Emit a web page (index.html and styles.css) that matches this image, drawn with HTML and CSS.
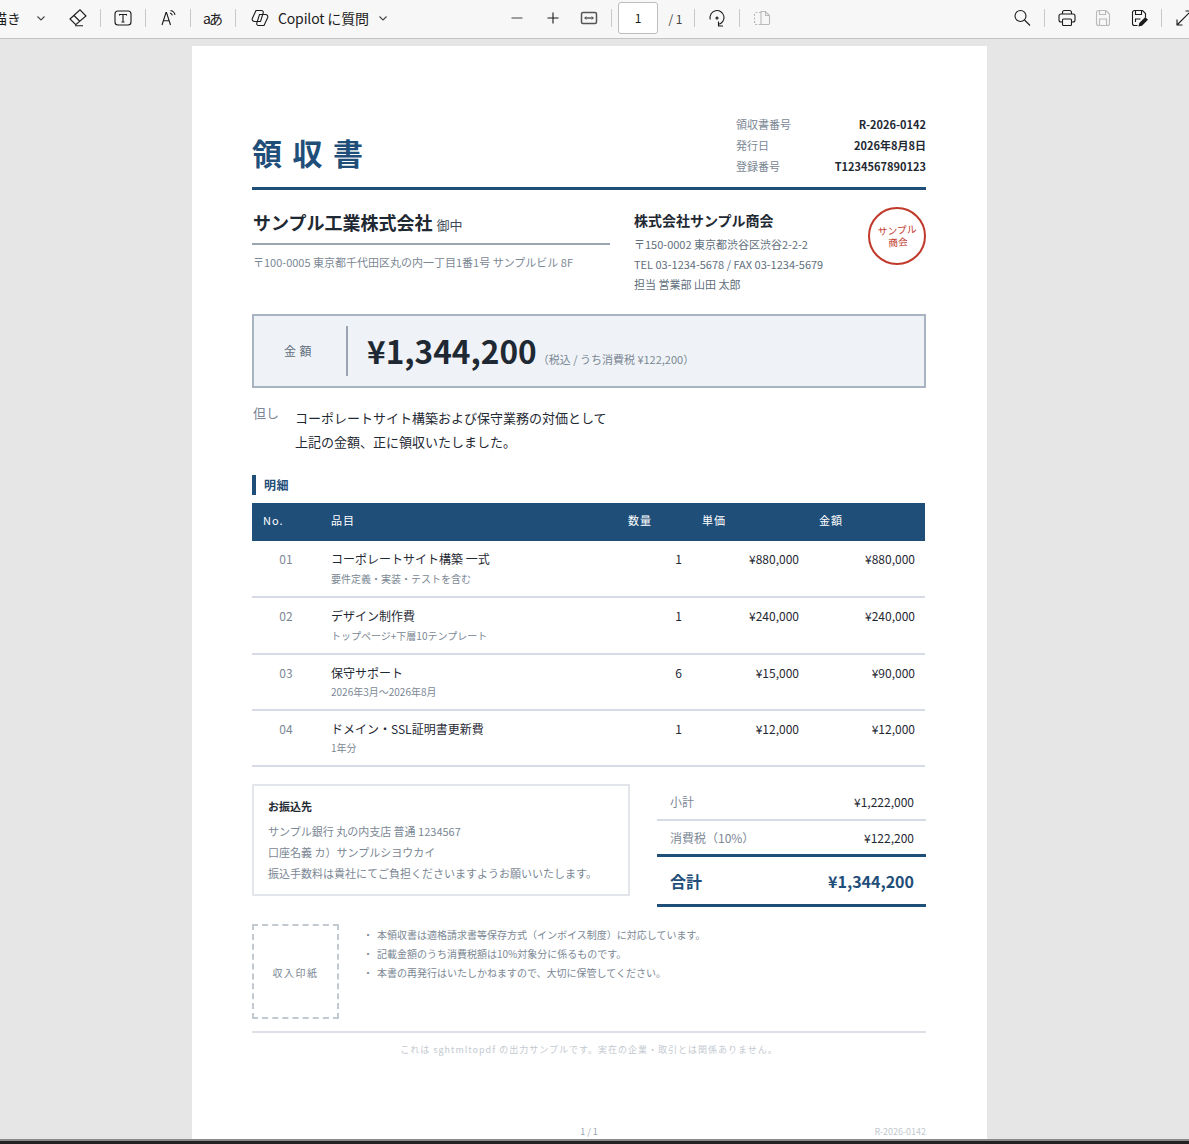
FILE: index.html
```html
<!DOCTYPE html>
<html lang="ja">
<head>
    <meta charset="UTF-8">
    <meta name="viewport" content="width=device-width, initial-scale=1.0">
    <title>領収書</title>
    <link rel="stylesheet" href="styles.css">
</head>
<body>
    <!-- PDF viewer toolbar -->
    <div class="toolbar">
        <div class="tool-draw">
            <span>描き</span>
            <svg class="chev" viewBox="0 0 8 5"><path d="M.5.5 4 4 7.500.5"/></svg>
        </div>
        <div class="tool">
            <svg viewBox="0 0 18 18"><path d="M1 10 11 .8 17 7 7 15.500H6.500zM5 6.500l6 6M6 16.800h8"/></svg>
        </div>
        <i class="sep"></i>
        <div class="tool">
            <svg viewBox="0 0 18 18"><rect x="1" y="2" width="16" height="14" rx="3"/><path d="M5.500 6.500v-1h7v1M9 5.500V13M7.500 13h3"/></svg>
        </div>
        <i class="sep"></i>
        <div class="tool">
            <svg viewBox="0 0 18 18"><path d="M3 16 7 3.500h.5L11.500 16M4.300 11.800h6M11 4c1.300.3 2 1 2.400 2.300M11.500 1.500c2.500.5 4 2 4.500 4.500"/></svg>
        </div>
        <i class="sep"></i>
        <div class="tool tool-text">aあ</div>
        <i class="sep"></i>
        <div class="tool-copilot">
            <svg class="copilot" viewBox="0 0 18 18"><path d="M5 1.500h5.500a1.800 1.800 0 0 1 1.700 2.400L9.500 12.500h-6a2.300 2.300 0 0 1-2.200-3z"/><path d="M8.500 5.500h6a2.300 2.300 0 0 1 2.200 3L13 16.500H7.500a1.800 1.800 0 0 1-1.700-2.400z"/></svg>
            <span>Copilot に質問</span>
            <svg class="chev" viewBox="0 0 8 5"><path d="M.5.5 4 4 7.500.5"/></svg>
        </div>

        <div class="tool tool-first">
            <svg class="soft" viewBox="0 0 18 18"><path d="M3.500 9h11"/></svg>
        </div>
        <div class="tool">
            <svg viewBox="0 0 18 18"><path d="M3.500 9h11M9 3.500v11"/></svg>
        </div>
        <div class="tool">
            <svg class="soft fit" viewBox="0 0 18 18"><rect x="1.500" y="3.500" width="15" height="11" rx="1.500"/><path class="solid" d="m4 9 2.500-2v4zM14 9l-2.500-2v4z"/><path d="M6.500 9h5"/></svg>
        </div>
        <i class="sep"></i>
        <div class="page-input">1</div>
        <span class="page-total">/ 1</span>
        <i class="sep"></i>
        <div class="tool">
            <svg viewBox="0 0 18 18"><path d="M2.300 10.500A7 7 0 1 1 10 15.500M10.500 12.500V17H15"/><circle cx="9" cy="9" r="1"/></svg>
        </div>
        <i class="sep"></i>
        <div class="tool tool-off">
            <svg viewBox="0 0 18 18"><path stroke-dasharray="2 1.500" d="M8 3.500H3a1.500 1.500 0 0 0-1.500 1.500v9A1.500 1.500 0 0 0 3 15.500h5"/><path d="M8 2.500h4.500l4 4v7.500a1.500 1.500 0 0 1-1.500 1.500H8zM12.500 2.500v4h4"/></svg>
        </div>

        <div class="tool tool-right">
            <svg viewBox="0 0 18 18"><circle cx="7.500" cy="7" r="5.500"/><path d="m11.500 11 5.500 5.500"/></svg>
        </div>
        <i class="sep"></i>
        <div class="tool">
            <svg viewBox="0 0 18 18"><path d="M4.500 5V3.500a2 2 0 0 1 2-2h5a2 2 0 0 1 2 2V5M4.500 13H3a2 2 0 0 1-2-2V7a2 2 0 0 1 2-2h12a2 2 0 0 1 2 2v4a2 2 0 0 1-2 2h-1.500"/><rect x="4.500" y="10" width="9" height="6.500" rx="1"/></svg>
        </div>
        <div class="tool tool-off">
            <svg viewBox="0 0 18 18"><path d="M2.500 3.500a2 2 0 0 1 2-2h7.500l3.500 3.500v9.500a2 2 0 0 1-2 2h-9a2 2 0 0 1-2-2zM5.500 1.500v4h6v-4M5.500 16.500V10h7v6.500"/></svg>
        </div>
        <div class="tool">
            <svg viewBox="0 0 18 18"><path d="M7.500 16.500h-3a2 2 0 0 1-2-2v-11a2 2 0 0 1 2-2h8l3 3v4M5.500 1.500v4h6v-4M5.500 13v-3h5"/><path class="solid" d="m8.500 17.500.8-3.500 6-6 2.700 2.700-6 6z"/></svg>
        </div>
        <i class="sep"></i>
        <div class="tool tool-last">
            <svg viewBox="0 0 18 18"><path d="M2 16 16 2M2 10.500V16h5.500M10.500 2H16v5.500"/></svg>
        </div>
    </div>

    <div class="viewer">
        <div class="page">
            <!-- Title and receipt info -->
            <div class="doc-header">
                <h1 class="doc-title">領収書</h1>
                <div class="doc-meta">
                    <div class="meta-row"><span>領収書番号</span><b>R-2026-0142</b></div>
                    <div class="meta-row"><span>発行日</span><b>2026年8月8日</b></div>
                    <div class="meta-row"><span>登録番号</span><b>T1234567890123</b></div>
                </div>
            </div>

            <div class="parties">
                <div class="to">
                    <div class="to-name">サンプル工業株式会社 <small>御中</small></div>
                    <div class="to-addr">〒100-0005 東京都千代田区丸の内一丁目1番1号 サンプルビル 8F</div>
                </div>
                <div class="from">
                    <div class="from-name">株式会社サンプル商会</div>
                    <p>〒150-0002 東京都渋谷区渋谷2-2-2</p>
                    <p>TEL 03-1234-5678 / FAX 03-1234-5679</p>
                    <p>担当 営業部 山田 太郎</p>
                </div>
                <div class="seal"><span>サンプル<br>商会</span></div>
            </div>

            <div class="amount-box">
                <div class="amount-label">金 額</div>
                <div class="amount-value">¥1,344,200</div>
                <div class="amount-note">（税込 / うち消費税 ¥122,200）</div>
            </div>

            <div class="tadashi">
                <div class="tadashi-label">但し</div>
                <div class="tadashi-text">コーポレートサイト構築および保守業務の対価として<br>上記の金額、正に領収いたしました。</div>
            </div>

            <h2 class="section-title">明細</h2>
            <table class="items">
                <colgroup>
                    <col class="col-no"><col class="col-name"><col class="col-qty"><col class="col-price"><col class="col-sum">
                </colgroup>
                <thead>
                    <tr><th>No.</th><th>品目</th><th>数量</th><th>単価</th><th>金額</th></tr>
                </thead>
                <tbody>
                    <tr>
                        <td class="no">01</td>
                        <td>コーポレートサイト構築 一式<span class="sub">要件定義・実装・テストを含む</span></td>
                        <td class="num">1</td><td class="num">¥880,000</td><td class="num">¥880,000</td>
                    </tr>
                    <tr>
                        <td class="no">02</td>
                        <td>デザイン制作費<span class="sub">トップページ+下層10テンプレート</span></td>
                        <td class="num">1</td><td class="num">¥240,000</td><td class="num">¥240,000</td>
                    </tr>
                    <tr>
                        <td class="no">03</td>
                        <td>保守サポート<span class="sub">2026年3月〜2026年8月</span></td>
                        <td class="num">6</td><td class="num">¥15,000</td><td class="num">¥90,000</td>
                    </tr>
                    <tr>
                        <td class="no">04</td>
                        <td>ドメイン・SSL証明書更新費<span class="sub">1年分</span></td>
                        <td class="num">1</td><td class="num">¥12,000</td><td class="num">¥12,000</td>
                    </tr>
                </tbody>
            </table>

            <div class="summary">
                <div class="bank">
                    <div class="bank-title">お振込先</div>
                    <p>サンプル銀行 丸の内支店 普通 1234567</p>
                    <p>口座名義 カ）サンプルシヨウカイ</p>
                    <p>振込手数料は貴社にてご負担くださいますようお願いいたします。</p>
                </div>
                <div class="totals">
                    <div class="total-row"><span>小計</span><span class="val">¥1,222,000</span></div>
                    <div class="total-row tax"><span>消費税（10%）</span><span class="val">¥122,200</span></div>
                    <div class="total-row grand"><span>合計</span><span>¥1,344,200</span></div>
                </div>
            </div>

            <div class="extras">
                <div class="stamp">収入印紙</div>
                <ul class="notes">
                    <li>本領収書は適格請求書等保存方式（インボイス制度）に対応しています。</li>
                    <li>記載金額のうち消費税額は10%対象分に係るものです。</li>
                    <li>本書の再発行はいたしかねますので、大切に保管してください。</li>
                </ul>
            </div>

            <div class="disclaimer">これは sghtmltopdf の出力サンプルです。実在の企業・取引とは関係ありません。</div>

            <div class="page-foot">
                <span class="foot-side"></span>
                <span>1 / 1</span>
                <span class="foot-side foot-ref">R-2026-0142</span>
            </div>
        </div>
    </div>
    <div class="taskbar-edge"></div>
</body>
</html>
```

FILE: styles.css
```css
/* General Reset */
html, body {
    margin: 0;
    padding: 0;
    height: 100%;
    overflow: hidden;
    background: #e6e6e6;
    font-family: "Noto Sans CJK JP", "Noto Sans", sans-serif;
    color: #1f2933;
}

body {
    display: flex;
    flex-direction: column;
}

/* Toolbar */
.toolbar {
    flex: none;
    display: flex;
    align-items: center;
    height: 36px;
    padding-bottom: 2px;
    background: #f7f7f7;
    border-bottom: 1px solid #c4c4c4;
    overflow: hidden;
    color: #1b1b1b;
    font-size: 14px;
}

.toolbar svg {
    width: 18px;
    height: 18px;
    fill: none;
    stroke: #1b1b1b;
    stroke-width: 1.1;
}

.toolbar svg .solid {
    fill: #1b1b1b;
    stroke: none;
}

.toolbar svg.soft {
    stroke: #555;
}

.toolbar svg.soft .solid {
    fill: #555;
}

.toolbar svg.fit {
    stroke-width: 1.5;
}

.toolbar svg.chev {
    width: 8px;
    height: 5px;
    stroke: #444;
}

.tool-draw {
    flex: none;
    display: flex;
    align-items: center;
    width: 67px;
    margin-left: -7px;
}

.tool-draw .chev {
    margin-left: 16px;
}

.tool {
    flex: none;
    width: 36px;
    display: flex;
    justify-content: center;
    align-items: center;
}

.tool-text {
    box-sizing: border-box;
    padding-right: 2px;
    font-size: 14px;
    letter-spacing: -2px;
}

.tool-off svg {
    stroke: #b9b9b9;
}

.tool-first {
    margin-left: 104px;
}

.tool-right {
    margin-left: auto;
}

.tool-last {
    margin-right: -13px;
}

.sep {
    flex: none;
    width: 1px;
    height: 18px;
    margin: 0 4px;
    background: #c8c8c8;
}

.tool-copilot {
    flex: none;
    display: flex;
    align-items: center;
    width: 155px;
    padding-left: 11px;
    box-sizing: border-box;
}

.tool-copilot span {
    margin-left: 9px;
    white-space: nowrap;
    letter-spacing: -0.15px;
}

.tool-copilot .chev {
    margin-left: 10px;
}

.page-input {
    flex: none;
    width: 40px;
    height: 32px;
    margin-left: 2px;
    box-sizing: border-box;
    border: 1px solid #bdbdbd;
    border-radius: 3px;
    background: #fff;
    text-align: center;
    line-height: 30px;
    font-size: 12px;
}

.page-total {
    flex: none;
    width: 32px;
    box-sizing: border-box;
    padding-left: 3px;
    text-align: center;
    font-size: 12px;
    color: #444;
}

/* Viewer and page */
.viewer {
    flex: 1;
    min-height: 0;
    display: flex;
    justify-content: center;
    padding: 7px 10px 0 0;
}

.page {
    width: 795px;
    box-sizing: border-box;
    padding: 66px 61px 0 60px;
    background: #fff;
    display: flex;
    flex-direction: column;
}

.taskbar-edge {
    flex: none;
    height: 2px;
    background: #8a8a8a;
    border-bottom: 3px solid #222;
}

/* Header */
.doc-header {
    display: flex;
    justify-content: space-between;
    align-items: flex-end;
    padding-bottom: 10px;
    border-bottom: 3px solid #1f4e79;
}

.doc-title {
    margin: 0 0 2px;
    font-size: 30px;
    line-height: 46px;
    letter-spacing: 10.500px;
    font-weight: 700;
    color: #1f4e79;
}

.doc-meta {
    width: 190px;
    margin-top: 2px;
}

.meta-row {
    display: flex;
    justify-content: space-between;
    height: 21px;
    line-height: 21px;
    font-size: 11px;
    color: #7b8794;
}

.meta-row b {
    color: #1f2933;
}

/* Addressee and issuer */
.parties {
    display: flex;
    margin-top: 21px;
}

.to {
    width: 358px;
    box-sizing: border-box;
}

.to-name {
    height: 32px;
    line-height: 22px;
    font-size: 18px;
    font-weight: 700;
    border-bottom: 2px solid #9aa5b1;
    padding-left: 1px;
}

.to-name small {
    font-size: 13px;
    font-weight: 400;
    color: #3e4c59;
}

.to-addr {
    margin-top: 7px;
    padding-left: 1px;
    line-height: 20px;
    font-size: 11px;
    color: #7b8794;
}

.from {
    margin: -2px 0 0 24px;
    flex: 1;
    font-size: 11px;
    color: #616e7c;
}

.from-name {
    font-size: 14px;
    font-weight: 700;
    line-height: 22px;
    margin-bottom: 3px;
    color: #1f2933;
}

.from p {
    margin: 0;
    line-height: 20px;
}

.seal {
    flex: none;
    width: 58px;
    height: 58px;
    box-sizing: border-box;
    border: 2px solid #c0392b;
    border-radius: 50%;
    display: flex;
    align-items: center;
    justify-content: center;
    text-align: center;
    font-size: 9.800px;
    line-height: 12px;
    color: #c0392b;
    margin-top: -4px;
}

.seal span {
    transform: rotate(-4deg);
}

/* Amount */
.amount-box {
    display: flex;
    align-items: baseline;
    height: 74px;
    box-sizing: border-box;
    margin-top: 20px;
    border: 2px solid #a9b4c2;
    background: #eff3f7;
}

.amount-label {
    flex: none;
    align-self: center;
    width: 94px;
    height: 50px;
    box-sizing: border-box;
    padding-right: 4px;
    border-right: 2px solid #9aa5b1;
    text-align: center;
    font-size: 12px;
    letter-spacing: 0.5px;
    line-height: 50px;
    color: #616e7c;
}

.amount-value {
    margin-left: 19px;
    font-size: 31.600px;
    font-weight: 700;
    line-height: 68px;
    color: #1f2933;
}

.amount-note {
    font-size: 11px;
    color: #7b8794;
    margin-left: 1px;
}

/* Tadashi */
.tadashi {
    display: flex;
    margin-top: 14px;
}

.tadashi-label {
    width: 43px;
    flex: none;
    font-size: 13px;
    line-height: 22px;
    color: #7b8794;
    padding-left: 1px;
    box-sizing: border-box;
}

.tadashi-text {
    font-size: 13px;
    line-height: 24px;
    color: #1f2933;
    padding-top: 4px;
}

/* Items table */
.section-title {
    margin: 21px 0 8px;
    height: 20px;
    padding-left: 8px;
    border-left: 4px solid #1f4e79;
    font-size: 12px;
    line-height: 20px;
    font-weight: 700;
    letter-spacing: 0.5px;
    color: #1f4e79;
}

.items {
    width: 673px;
    table-layout: fixed;
    border-collapse: collapse;
    font-size: 12px;
}

.col-no { width: 69px; }
.col-name { width: 297px; }
.col-qty { width: 74px; }
.col-price { width: 117px; }
.col-sum { width: 116px; }

.items th {
    height: 38px;
    padding: 0 10px 4px 11px;
    box-sizing: border-box;
    background: #1f4e79;
    color: #fff;
    font-size: 11px;
    font-weight: 400;
    text-align: left;
    letter-spacing: 1px;
}

.items th + th {
    padding-left: 10px;
}

.items td {
    height: 56.330px;
    padding: 8px 10px 0;
    border-bottom: 2px solid #d6dbe5;
    vertical-align: top;
    box-sizing: border-box;
    line-height: 20px;
}

.items td.no {
    text-align: center;
    color: #7b8794;
    padding-left: 0;
    padding-right: 1px;
}

.items td.num {
    text-align: right;
}

.sub {
    display: block;
    margin-top: 0.5px;
    font-size: 10px;
    line-height: 18px;
    color: #7b8794;
}

/* Bank and totals */
.summary {
    display: flex;
    align-items: flex-start;
    justify-content: space-between;
    margin-top: 17px;
}

.bank {
    width: 378px;
    height: 112px;
    box-sizing: border-box;
    padding: 10px 14px;
    border: 2px solid #e2e6eb;
    font-size: 11px;
    color: #7b8794;
}

.bank-title {
    font-size: 11px;
    font-weight: 700;
    color: #1f2933;
    line-height: 20px;
    margin-bottom: 5px;
}

.bank p {
    margin: 0;
    line-height: 21px;
}

.totals {
    width: 269px;
}

.total-row {
    display: flex;
    justify-content: space-between;
    padding: 0 12px 0 13px;
    height: 35px;
    line-height: 36px;
    font-size: 12px;
    color: #7b8794;
    border-bottom: 2px solid #d6dbe5;
}

.total-row .val {
    color: #1f2933;
}

.total-row.tax {
    height: 33px;
    line-height: 34px;
    border-bottom: 3px solid #1f4e79;
}

.total-row.grand {
    height: 47px;
    line-height: 48px;
    font-size: 16px;
    font-weight: 700;
    color: #1f4e79;
    border-bottom: 3px solid #1f4e79;
}

/* Stamp and notes */
.extras {
    display: flex;
    margin-top: 17px;
}

.stamp {
    flex: none;
    width: 87px;
    height: 95px;
    box-sizing: border-box;
    padding-top: 1px;
    border: 2px dashed #c3c9d0;
    display: flex;
    align-items: center;
    justify-content: center;
    font-size: 10px;
    letter-spacing: 1.500px;
    color: #7b8794;
}

.notes {
    margin: 1px 0 0;
    padding: 0 0 0 38px;
    list-style: none;
    font-size: 10px;
    line-height: 19px;
    color: #7b8794;
}

.notes li::before {
    content: "・";
    display: inline-block;
    width: 10px;
    margin-left: -10px;
    text-align: left;
    transform: translateX(-4px);
}

.disclaimer {
    margin-top: 12px;
    padding-top: 10px;
    border-top: 2px solid #dde1e7;
    text-align: center;
    font-size: 9px;
    line-height: 14px;
    letter-spacing: 1px;
    color: #c3c9d0;
}

.page-foot {
    margin-top: auto;
    display: flex;
    justify-content: space-between;
    align-items: center;
    height: 15px;
    font-size: 9px;
    color: #9aa5b1;
}

.foot-side {
    width: 120px;
}

.foot-ref {
    text-align: right;
    color: #c3c9d0;
}
```
